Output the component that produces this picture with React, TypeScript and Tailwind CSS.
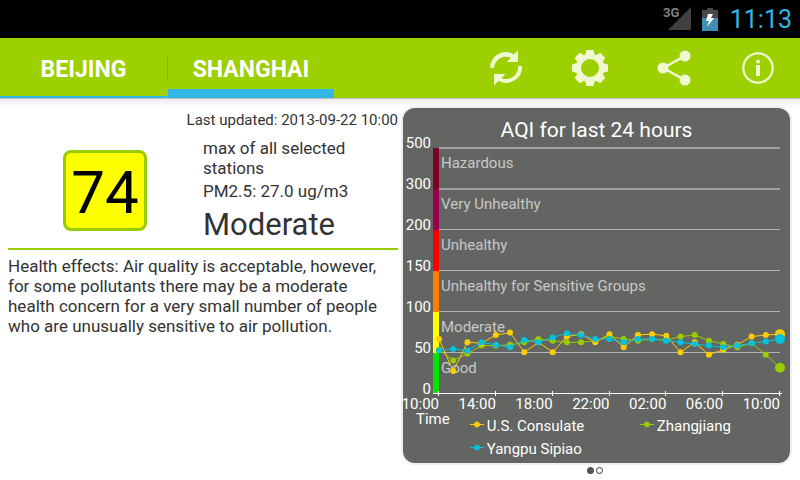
const bands = [
  { label: "Hazardous", top: "500", color: "#7e0023" },
  { label: "Very Unhealthy", top: "300", color: "#99004c" },
  { label: "Unhealthy", top: "200", color: "#ff0000" },
  { label: "Unhealthy for Sensitive Groups", top: "150", color: "#ff7e00" },
  { label: "Moderate", top: "100", color: "#ffff00" },
  { label: "Good", top: "50", color: "#00e400" },
];

const series = [
  {
    name: "Zhangjiang",
    color: "#99cc00",
    values: [54, 41, 49, 59, 59, 60, 63, 67, 65, 63, 63, 65, 70, 67, 65, 67, 66, 70, 72, 65, 61, 57, 62, 48, 32],
  },
  {
    name: "U.S. Consulate",
    color: "#ffcc00",
    values: [67, 28, 63, 62, 72, 75, 51, 63, 51, 70, 73, 63, 73, 57, 72, 73, 71, 51, 63, 48, 54, 60, 70, 72, 73],
  },
  {
    name: "Yangpu Sipiao",
    color: "#00c3de",
    values: [53, 55, 53, 63, 60, 57, 66, 63, 69, 74, 72, 67, 67, 63, 67, 67, 65, 63, 61, 59, 57, 59, 62, 64, 67],
  },
];

const hours = ["10:00", "14:00", "18:00", "22:00", "02:00", "06:00", "10:00"];

const LEFT = 36;
const RIGHT = 377;
const TOP = 8;
const BAND = 41;
const BASE = TOP + BAND * 6;
const px = (i: number) => LEFT + (i * (RIGHT - LEFT)) / 24;
const py = (v: number) => BASE - (v * BAND) / 50;

function Chart() {
  return (
    <svg viewBox="0 0 387 271" className="block w-full overflow-visible" role="img" aria-label="AQI for last 24 hours">
      {bands.map((b, i) => (
        <g key={b.label}>
          <rect x={LEFT} y={TOP + i * BAND - 1} width={RIGHT - LEFT} height={i < 2 ? 2 : 1} fill={i < 2 ? "#a0a0a0" : "#b4b4b4"} />
          <rect x="30" y={TOP + i * BAND} width="6" height={BAND} fill={b.color} />
          <text x="28" y={TOP + i * BAND} textAnchor="end" fontSize="15" fill="#fff">
            {b.top}
          </text>
          <text x="38" y={TOP + i * BAND + 20} fontSize="15" fill="#c8c8c8">
            {b.label}
          </text>
        </g>
      ))}
      <text x="28" y={BASE} textAnchor="end" fontSize="15" fill="#fff">
        0
      </text>
      <rect x="30" y={BASE - 1} width={RIGHT - 28} height="1" fill="#fff" />
      {hours.map((h, i) => (
        <g key={i}>
          <rect x={Math.round(px(i * 4)) - 1} y={BASE - 3} width="1" height="5" fill="#fff" />
          <text x={px(i * 4)} y={BASE + 15} textAnchor="end" fontSize="15" fill="#fff">
            {h}
          </text>
        </g>
      ))}
      {series.map((s) => (
        <g key={s.name} fill={s.color}>
          <polyline points={s.values.map((v, i) => `${px(i)},${py(v)}`).join(" ")} fill="none" stroke={s.color} />
          {s.values.map((v, i) => (
            <circle key={i} cx={px(i)} cy={py(v)} r={i === 24 ? 5 : 3} />
          ))}
        </g>
      ))}
    </svg>
  );
}

function Legend({ name, color }: { name: string; color: string }) {
  return (
    <li className="flex items-center gap-[3px]">
      <svg viewBox="0 0 14 12" className="h-3 w-[14px]" fill={color} stroke={color}>
        <path d="M0 3.5h14" />
        <circle cx="7" cy="3.5" r="2.5" />
      </svg>
      {name}
    </li>
  );
}

function StatusBar() {
  return (
    <div className="flex h-[38px] items-center justify-end bg-black pr-2">
      <svg viewBox="0 0 28 26" className="mr-[11px] h-[26px] w-7">
        <path d="M28 1v23H5z" fill="#404040" />
        <path d="M0 0h16v13H0z" fill="#000" />
        <text x="0" y="11" fontSize="13" fontWeight="700" fill="#808080">
          3G
        </text>
      </svg>
      <svg viewBox="0 0 16 24" className="mr-3 h-6 w-4">
        <path d="M5 1h6v2h5v9H0V3h5z" fill="#484848" />
        <path d="M0 11h16v13H0z" fill="#3f8fb5" />
        <path d="M6 7h5l-2 4h3l-7 9 2-6H4z" fill="#fff" />
      </svg>
      <time className="pt-[2px] text-[25px] leading-9 text-[#33b5e5]">11:13</time>
    </div>
  );
}

function Header() {
  return (
    <header className="flex h-[60px] justify-between bg-[#9cd000]">
      <nav className="flex text-[23px] font-bold text-white">
        <button className="w-[167px] border-b-2 border-[#33b5e5] pt-[6px]">BEIJING</button>
        <div className="mt-[18px] h-6 w-px bg-[#87b300]" />
        <button className="w-[166px] border-b-[9px] border-[#33b5e5] pt-[14px]">SHANGHAI</button>
      </nav>
      <div className="flex text-[#f0f8d2]">
        <button aria-label="Refresh" className="grid w-[84px] place-items-center">
          <svg viewBox="0 0 36 38" className="h-[38px] w-9" fill="currentColor">
            <path d="M2 19A16 16 0 0 1 26 5.2L30 1.500V13H18.500L22.800 8.700A12 12 0 0 0 6 19z" />
            <path d="M34 17A16 16 0 0 1 10.500 32L6 36.500V25H17.500L13.500 29.200A12 12 0 0 0 30 17z" />
          </svg>
        </button>
        <button aria-label="Settings" className="grid w-[84px] place-items-center">
          <svg viewBox="-18 -18 36 36" className="h-9 w-9" fill="currentColor">
            <circle r="11.500" fill="none" stroke="currentColor" strokeWidth="5" />
            {[0, 45, 90, 135, 180, 225, 270, 315].map((a) => (
              <path key={a} transform={`rotate(${a})`} d="M-5-13L-3.500-18h7L5-13z" />
            ))}
          </svg>
        </button>
        <button aria-label="Share" className="grid w-[84px] place-items-center">
          <svg viewBox="0 0 34 36" className="h-9 w-[34px]" fill="currentColor">
            <path d="M28 6L6 18l22 12" fill="none" stroke="currentColor" strokeWidth="2.500" />
            <circle cx="28" cy="6" r="5.500" />
            <circle cx="6" cy="18" r="5.500" />
            <circle cx="28" cy="30" r="5.500" />
          </svg>
        </button>
        <button aria-label="Information" className="grid w-[84px] place-items-center">
          <svg viewBox="0 0 32 32" className="h-8 w-8" fill="currentColor">
            <circle cx="16" cy="16" r="14.700" fill="none" stroke="currentColor" strokeWidth="2.200" />
            <circle cx="16" cy="9.500" r="2" />
            <path d="M14 13h4v11h-4z" />
          </svg>
        </button>
      </div>
    </header>
  );
}

export default function App() {
  return (
    <div className="min-h-screen bg-white font-[Roboto,sans-serif] text-[#333333]">
      <StatusBar />
      <Header />
      <div className="h-[10px] border-t border-[#c0c0c0] bg-linear-to-b from-[#eeebf0] to-white" />
      <main className="flex gap-[5px] pr-[10px] pl-2">
        <section className="min-w-0 flex-1">
          <p className="pt-[2px] text-right text-[15px] leading-5">Last updated: 2013-09-22 10:00</p>
          <div className="flex items-center border-b-2 border-[#99cc00] pt-2 pb-[5px]">
            <div className="w-1/2">
              <div className="ml-[55px] flex h-[81px] w-[84px] items-center justify-center rounded-lg border-[3px] border-[#99cc00] bg-[#ffff00] text-[60px] text-black">
                <span className="pt-1">74</span>
              </div>
            </div>
            <div className="w-1/2 pr-8 text-[17px] leading-5">
              <p>max of all selected stations</p>
              <p className="pt-[3px]">PM2.5: 27.0 ug/m3</p>
              <p className="pt-[6px] text-[31px] leading-9">Moderate</p>
            </div>
          </div>
          <p className="pt-[6px] text-[17px] leading-5">
            Health effects: Air quality is acceptable, however, for some pollutants there may be a moderate health
            concern for a very small number of people who are unusually sensitive to air pollution.
          </p>
        </section>
        <section className="w-[387px] shrink-0">
          <div className="rounded-xl bg-[#636562] pb-[2px] text-white shadow-[0_0_0_2px_#f0eff0]">
            <h2 className="pt-3 text-center text-[21px] leading-5">AQI for last 24 hours</h2>
            <Chart />
            <div className="flex gap-5 pl-[13px] text-[15px]">
              <span className="leading-4">Time</span>
              <ul className="grid grid-cols-[170px_auto] pt-1 leading-[23px]">
                <Legend name={series[1].name} color={series[1].color} />
                <Legend name={series[0].name} color={series[0].color} />
                <Legend name={series[2].name} color={series[2].color} />
              </ul>
            </div>
          </div>
          <div className="flex justify-center gap-[2px] pt-1 pr-1">
            <span className="h-[7px] w-[7px] rounded-full bg-[#555555]" />
            <span className="h-[7px] w-[7px] rounded-full border border-[#333333]" />
          </div>
        </section>
      </main>
    </div>
  );
}
